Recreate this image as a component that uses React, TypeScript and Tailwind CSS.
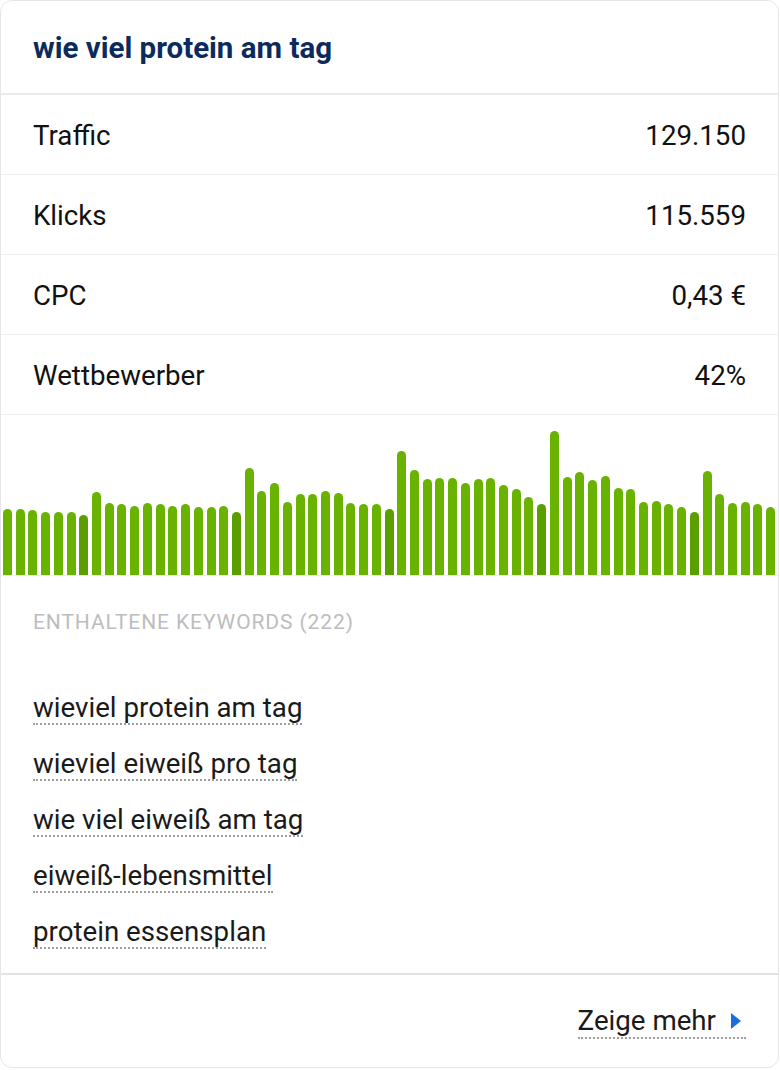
import React from 'react';

const stats = [
  { label: 'Traffic', value: '129.150' },
  { label: 'Klicks', value: '115.559' },
  { label: 'CPC', value: '0,43 €' },
  { label: 'Wettbewerber', value: '42%' },
];

// Balkenhöhen in px, jeder 12. Balken ist dunkler
const bars = [
  66, 66, 65, 63, 63, 63, 60, 83, 72, 71, 69, 72, 71, 69, 71, 68, 68, 69, 63, 107,
  84, 92, 73, 81, 81, 84, 82, 72, 71, 71, 66, 124, 105, 96, 97, 97, 92, 96, 97, 90,
  86, 78, 71, 144, 98, 103, 95, 99, 87, 86, 73, 74, 71, 68, 63, 104, 81, 72, 73, 71,
  68,
];

const keywords = [
  'wieviel protein am tag',
  'wieviel eiweiß pro tag',
  'wie viel eiweiß am tag',
  'eiweiß-lebensmittel',
  'protein essensplan',
];

const App: React.FC = () => {
  return (
    <div className="min-h-[1070px] bg-white" style={{ fontFamily: 'Roboto, "Liberation Sans", sans-serif' }}>
      <div className="w-[779px] border border-[#e6e6e6] rounded-[12px] bg-white overflow-hidden">
        {/* Titel */}
        <div className="h-[94px] px-[32px] pt-[33px] border-b-2 border-[#ebebeb]">
          <h2 className="text-[29.5px] leading-[28px] font-bold text-[#0b2b5c]">wie viel protein am tag</h2>
        </div>

        {/* Kennzahlen */}
        {stats.map((s) => (
          <div
            key={s.label}
            className="h-[80px] px-[32px] pt-[2px] flex items-center justify-between border-b border-[#f0f0f0] text-[27.7px] leading-[28px] text-[#111]"
          >
            <span>{s.label}</span>
            <span>{s.value}</span>
          </div>
        ))}

        {/* Verlauf */}
        <div className="h-[161px] px-[2px] flex items-end justify-between border-b border-[#ececec]">
          {bars.map((h, i) => (
            <div
              key={i}
              className={`w-[9px] rounded-t-full ${i % 12 === 6 ? 'bg-[#5a9e00]' : 'bg-[#69b300]'}`}
              style={{ height: h }}
            />
          ))}
        </div>

        {/* Keywords */}
        <div className="px-[32px] pt-[34px] pb-[24px] border-b-2 border-[#e3e3e3]">
          <div className="text-[21px] leading-[24px] tracking-[0.9px] text-[#bdbdbd] uppercase">
            Enthaltene Keywords (222)
          </div>
          <div className="mt-[60px] flex flex-col items-start gap-[25px]">
            {keywords.map((k) => (
              <a
                key={k}
                className="text-[27.7px] leading-[28px] text-[#1a1a1a] pb-[1px] border-b-2 border-dotted border-[#9e9e9e]"
              >
                {k}
              </a>
            ))}
          </div>
        </div>

        {/* Footer */}
        <div className="px-[32px] pt-[32px] pb-[28px] flex justify-end">
          <a className="flex items-center text-[27.7px] leading-[28px] text-[#1a1a1a] pb-[2px] border-b-2 border-dotted border-[#9e9e9e]">
            <span>Zeige mehr</span>
            <svg width="10" height="16" viewBox="0 0 10 16" className="ml-[15px] mr-[5px]">
              <path d="M0 0 L10 8 L0 16 Z" fill="#1a6fdc" />
            </svg>
          </a>
        </div>
      </div>
    </div>
  );
};

export default App;
